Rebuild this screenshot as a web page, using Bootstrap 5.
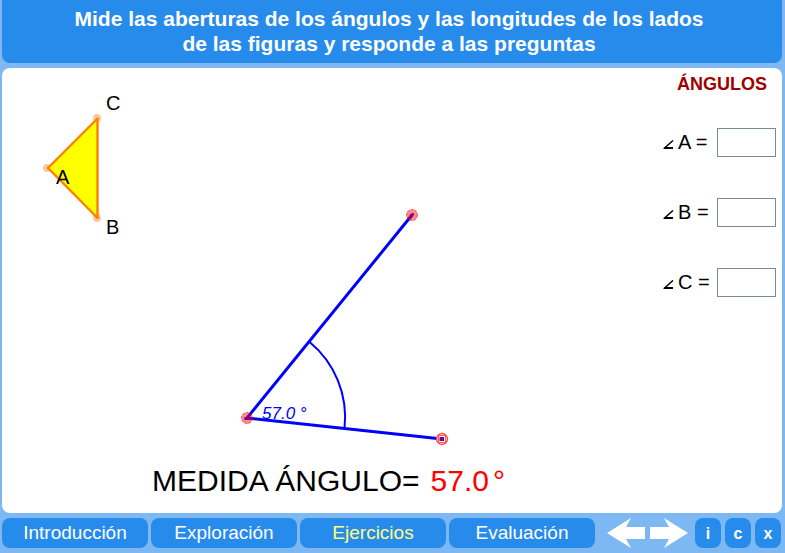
<!DOCTYPE html>
<html lang="es">
<head>
<meta charset="utf-8">
<meta name="viewport" content="width=device-width, initial-scale=1">
<title>Ángulos</title>
<link href="https://cdn.jsdelivr.net/npm/bootstrap@5.3.0/dist/css/bootstrap.min.css" rel="stylesheet">
<style>
  body { background: #7db8f3; font-family: "Liberation Sans", Arial, sans-serif; color: #000; padding: 0 3px 5px 2px; gap: 5px; }
  .title-bar { background: #278bec; color: #fff; border-radius: 8px; padding: 6px 14px 7px 8px; }
  .title-bar h1 { font-size: 21px; line-height: 25px; font-weight: 700; max-width: 645px; }
  .board { background: #fff; border-radius: 8px; }
  .figure-col { min-width: 0; }
  .figure-col svg text { font-family: "Liberation Sans", Arial, sans-serif; font-size: 20px; }
  .measure { font-size: 30px; line-height: 36px; padding-left: 150px; gap: 11px; }
  .measure output { color: #f00; }
  .answers { width: 120px; padding: 6px 6px 0 0; }
  .answers h2 { color: #a00000; font-size: 18px; line-height: 20px; font-weight: 700; padding-right: 9px; margin-bottom: 34px; }
  .answer-row { font-size: 20px; line-height: 28px; height: 29px; margin-bottom: 41px; }
  .answer-row label { gap: 4px; white-space: nowrap; padding: 0 0 2px 1px; }
  .answer-row label svg { margin-top: 6px; }
  .answer-row input { width: 59px; height: 29px; border: 1px solid #7a8a99; border-radius: 0; padding: 2px 4px; }
  .foot { gap: 3px; padding-right: 1px; }
  .tab-btn, .mini-btn { background: #278bec; color: #fff; border: 0; border-radius: 8px; height: 30px; padding: 0; }
  .tab-btn { font-size: 19px; line-height: 30px; }
  .tab-btn.current { color: #ffff80; }
  .arrows { gap: 5px; margin: 0 4px 0 9px; }
  .arrow-btn { border: 0; background: none; padding: 0; height: 30px; }
  .minis { gap: 4px; }
  .mini-btn { width: 26px; font-size: 16px; line-height: 32px; font-weight: 700; }
</style>
<script src="https://cdn.jsdelivr.net/npm/bootstrap@5.3.0/dist/js/bootstrap.bundle.min.js"></script>
</head>
<body class="d-flex flex-column min-vh-100">
<header class="title-bar rounded-top-0 text-center">
  <h1 class="mx-auto mb-0">Mide las aberturas de los ángulos y las longitudes de los lados de las figuras y responde a las preguntas</h1>
</header>

<main class="board d-flex flex-grow-1">
  <section class="figure-col flex-grow-1">
    <svg class="d-block w-100" viewBox="0 0 660 395" role="img" aria-label="Triángulo ABC y medidor de ángulos">
      <g fill="#ffc799"><circle cx="95" cy="50" r="4"/><circle cx="95" cy="150" r="4"/><circle cx="45" cy="100" r="4"/></g>
      <path d="M95.500 50.500V150L46 100Z" fill="#ff0" stroke="#ff8000" stroke-width="2.400" stroke-linejoin="round"/>
      <text x="104" y="42">C</text>
      <text x="54" y="116">A</text>
      <text x="104" y="166">B</text>
      <g fill="none" stroke="#00f">
        <path d="M410 147L245 350L440 371" stroke-width="3"/>
        <path d="M307 273.500A98 98 0 0 1 342.500 360.500" stroke-width="2"/>
      </g>
      <g fill="#f00" fill-opacity=".45" stroke="#f00" stroke-opacity=".6" stroke-width="1" stroke-dasharray="3 1">
        <circle cx="245" cy="350" r="5.500"/><circle cx="410" cy="147" r="5.500"/>
      </g>
      <circle cx="440" cy="371" r="5.500" fill="#fff" fill-opacity=".8" stroke="#ff4040" stroke-width="1.300"/>
      <rect x="436.500" y="367.500" width="7" height="7" fill="#fff" stroke="#f55"/>
      <path d="M437.500 371H442" stroke="#800080" stroke-width="4"/>
      <path d="M408.500 149L410.500 146.500M243.500 350.500H248" stroke="#800080" stroke-width="3" stroke-linecap="round"/>
      <text x="260" y="351" fill="#00f" class="fst-italic"><tspan font-size="17">57.0 °</tspan></text>
    </svg>
    <div class="measure d-flex"><span>MEDIDA ÁNGULO=</span><output>57.0<span class="ms-1">°</span></output></div>
  </section>
  <aside class="answers flex-shrink-0">
    <h2 class="text-end">ÁNGULOS</h2>
    <div class="answer-row d-flex justify-content-between">
      <label class="d-flex align-items-center" for="angA"><svg width="11" height="10" viewBox="0 0 11 10" aria-hidden="true"><path d="M10 .500L1 8.500" stroke="#000" stroke-width="1.500"/><path d="M0 9L2.500 7H10V9Z"/></svg>A =</label><input id="angA" type="text">
    </div>
    <div class="answer-row d-flex justify-content-between">
      <label class="d-flex align-items-center" for="angB"><svg width="11" height="10" viewBox="0 0 11 10" aria-hidden="true"><path d="M10 .500L1 8.500" stroke="#000" stroke-width="1.500"/><path d="M0 9L2.500 7H10V9Z"/></svg>B =</label><input id="angB" type="text">
    </div>
    <div class="answer-row d-flex justify-content-between">
      <label class="d-flex align-items-center" for="angC"><svg width="11" height="10" viewBox="0 0 11 10" aria-hidden="true"><path d="M10 .500L1 8.500" stroke="#000" stroke-width="1.500"/><path d="M0 9L2.500 7H10V9Z"/></svg>C =</label><input id="angC" type="text">
    </div>
  </aside>
</main>

<footer class="foot d-flex">
  <button type="button" class="tab-btn flex-fill w-25">Introducción</button>
  <button type="button" class="tab-btn flex-fill w-25">Exploración</button>
  <button type="button" class="tab-btn flex-fill w-25 current">Ejercicios</button>
  <button type="button" class="tab-btn flex-fill w-25">Evaluación</button>
  <div class="arrows d-flex">
    <button type="button" class="arrow-btn" aria-label="Anterior"><svg class="d-block" width="38" height="30" viewBox="0 0 38 30"><path d="M0 15L24 0L19 9H38V21H19L24 30Z" fill="#fff"/></svg></button>
    <button type="button" class="arrow-btn" aria-label="Siguiente"><svg class="d-block" width="38" height="30" viewBox="0 0 38 30"><path d="M38 15L14 0L19 9H0V21H19L14 30Z" fill="#fff"/></svg></button>
  </div>
  <div class="minis d-flex">
    <button type="button" class="mini-btn">i</button>
    <button type="button" class="mini-btn">c</button>
    <button type="button" class="mini-btn">x</button>
  </div>
</footer>
</body>
</html>
